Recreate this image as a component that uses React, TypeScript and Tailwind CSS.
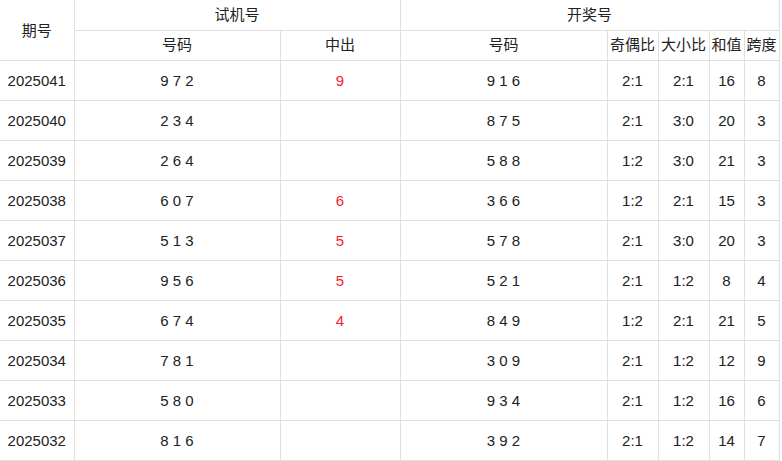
const rows = [
  ["2025041", "9 7 2", "9", "9 1 6", "2:1", "2:1", "16", "8"],
  ["2025040", "2 3 4", "", "8 7 5", "2:1", "3:0", "20", "3"],
  ["2025039", "2 6 4", "", "5 8 8", "1:2", "3:0", "21", "3"],
  ["2025038", "6 0 7", "6", "3 6 6", "1:2", "2:1", "15", "3"],
  ["2025037", "5 1 3", "5", "5 7 8", "2:1", "3:0", "20", "3"],
  ["2025036", "9 5 6", "5", "5 2 1", "2:1", "1:2", "8", "4"],
  ["2025035", "6 7 4", "4", "8 4 9", "1:2", "2:1", "21", "5"],
  ["2025034", "7 8 1", "", "3 0 9", "2:1", "1:2", "12", "9"],
  ["2025033", "5 8 0", "", "9 3 4", "2:1", "1:2", "16", "6"],
  ["2025032", "8 1 6", "", "3 9 2", "2:1", "1:2", "14", "7"],
]

const cell = "border border-[#e0e0e0] text-center align-middle p-0"
const data = `${cell} pt-[3px]`

export default function App() {
  return (
    <div
      className="bg-white w-[782px] h-[461px] overflow-hidden text-[15px] text-[#222]"
      style={{ fontFamily: '"Liberation Sans", "Noto Sans CJK SC", sans-serif' }}
    >
      <table className="border-collapse table-fixed w-[779px]">
        <colgroup>
          <col className="w-[74px]" />
          <col className="w-[206px]" />
          <col className="w-[120px]" />
          <col className="w-[207px]" />
          <col className="w-[51px]" />
          <col className="w-[51px]" />
          <col className="w-[35px]" />
          <col className="w-[35px]" />
        </colgroup>
        <thead>
          <tr className="h-[30px]">
            <th rowSpan={2} className={`${cell} border-l-0 border-t-0 font-normal pt-[2px]`}>期号</th>
            <th colSpan={2} className={`${cell} border-t-0 font-normal`}>试机号</th>
            <th colSpan={5} className={`${cell} border-t-0 font-normal`}>开奖号</th>
          </tr>
          <tr className="h-[30px]">
            <th className={`${cell} font-normal`}>号码</th>
            <th className={`${cell} font-normal`}>中出</th>
            <th className={`${cell} font-normal`}>号码</th>
            <th className={`${cell} font-normal whitespace-nowrap`}>奇偶比</th>
            <th className={`${cell} font-normal whitespace-nowrap`}>大小比</th>
            <th className={`${cell} font-normal whitespace-nowrap`}>和值</th>
            <th className={`${cell} font-normal whitespace-nowrap`}>跨度</th>
          </tr>
        </thead>
        <tbody>
          {rows.map((r) => (
            <tr key={r[0]} className="h-[40px]">
              <td className={`${data} border-l-0`}>{r[0]}</td>
              <td className={data}>{r[1]}</td>
              <td className={`${data} text-[#f5222d]`}>{r[2]}</td>
              <td className={data}>{r[3]}</td>
              <td className={data}>{r[4]}</td>
              <td className={data}>{r[5]}</td>
              <td className={data}>{r[6]}</td>
              <td className={data}>{r[7]}</td>
            </tr>
          ))}
        </tbody>
      </table>
    </div>
  )
}
